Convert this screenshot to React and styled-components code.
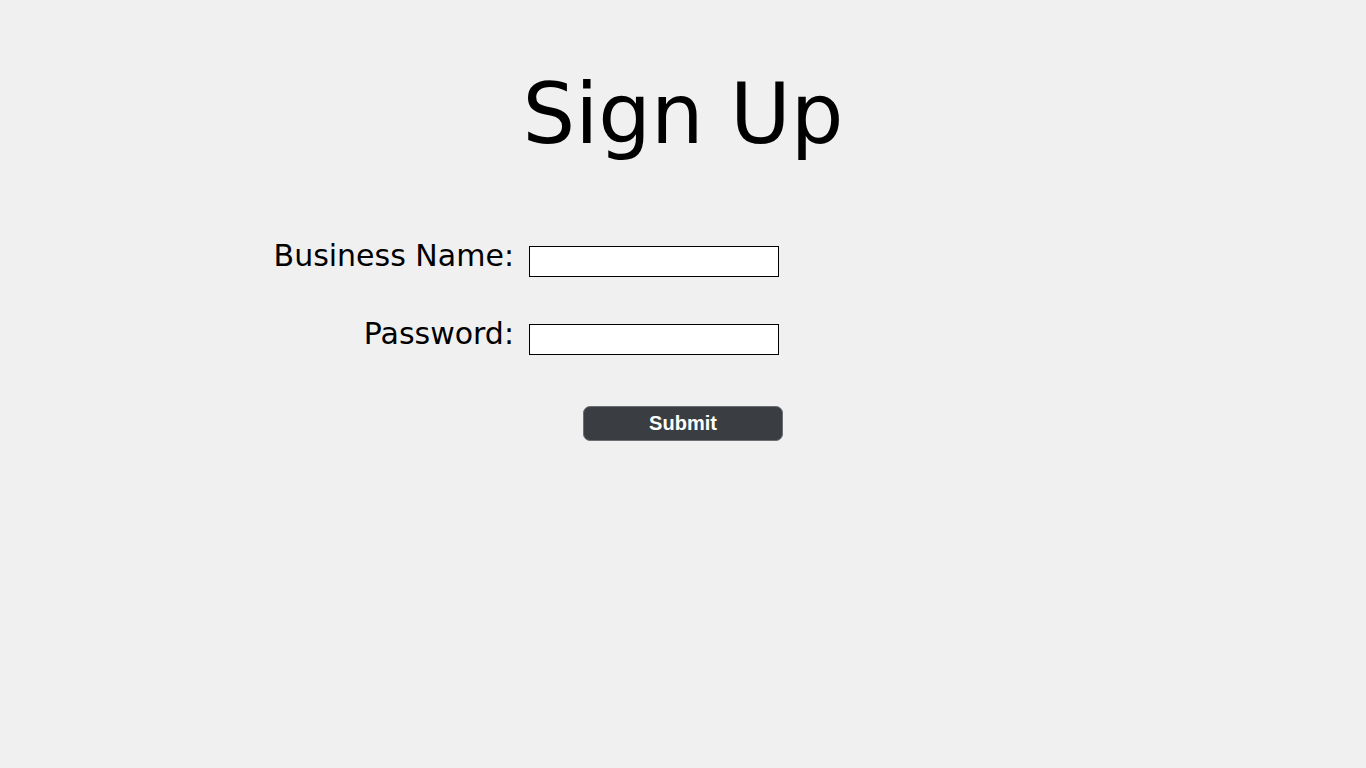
import React from "react";
import styled, { createGlobalStyle } from "styled-components";

const GlobalStyle = createGlobalStyle`
  body {
    margin: 0;
    background-color: #f0f0f0;
    font-family: "DejaVu Sans", "Noto Sans", sans-serif;
  }
`;

const Page = styled.div`
  display: flex;
  flex-direction: column;
  align-items: center;
  padding-top: 65px;
`;

const Title = styled.h1`
  margin: 0;
  font-size: 83px;
  font-weight: 400;
  line-height: 100px;
  color: #000;
`;

const Form = styled.form`
  align-self: stretch;
  display: grid;
  grid-template-columns: 514px 250px;
  column-gap: 15px;
  row-gap: 47px;
  align-items: end;
  margin-top: 81px;
`;

const Label = styled.label`
  justify-self: end;
  font-size: 30px;
  line-height: 31px;
  color: #000;
  transform: translateY(-6px);
`;

const Input = styled.input`
  box-sizing: border-box;
  width: 250px;
  height: 31px;
  margin: 0;
  border: 1px solid #000;
  background: #fff;
  padding: 2px 4px;
  font-size: 16px;
`;

const ButtonRow = styled.div`
  display: flex;
  justify-content: center;
  margin-top: 51px;
`;

const Submit = styled.button`
  width: 200px;
  height: 35px;
  border: 1px solid #6b6f73;
  border-radius: 7px;
  background-color: #3a3e42;
  color: #fff;
  font-family: "Liberation Sans", Arial, sans-serif;
  font-weight: 700;
  font-size: 20px;
  cursor: pointer;
`;

const App = () => {
  return (
    <>
      <GlobalStyle />
      <Page>
        <Title>Sign Up</Title>
        <Form onSubmit={(e) => e.preventDefault()}>
          <Label htmlFor="business">Business Name:</Label>
          <Input id="business" type="text" />
          <Label htmlFor="password">Password:</Label>
          <Input id="password" type="password" />
        </Form>
        <ButtonRow>
          <Submit type="submit">Submit</Submit>
        </ButtonRow>
      </Page>
    </>
  );
};

export default App;
